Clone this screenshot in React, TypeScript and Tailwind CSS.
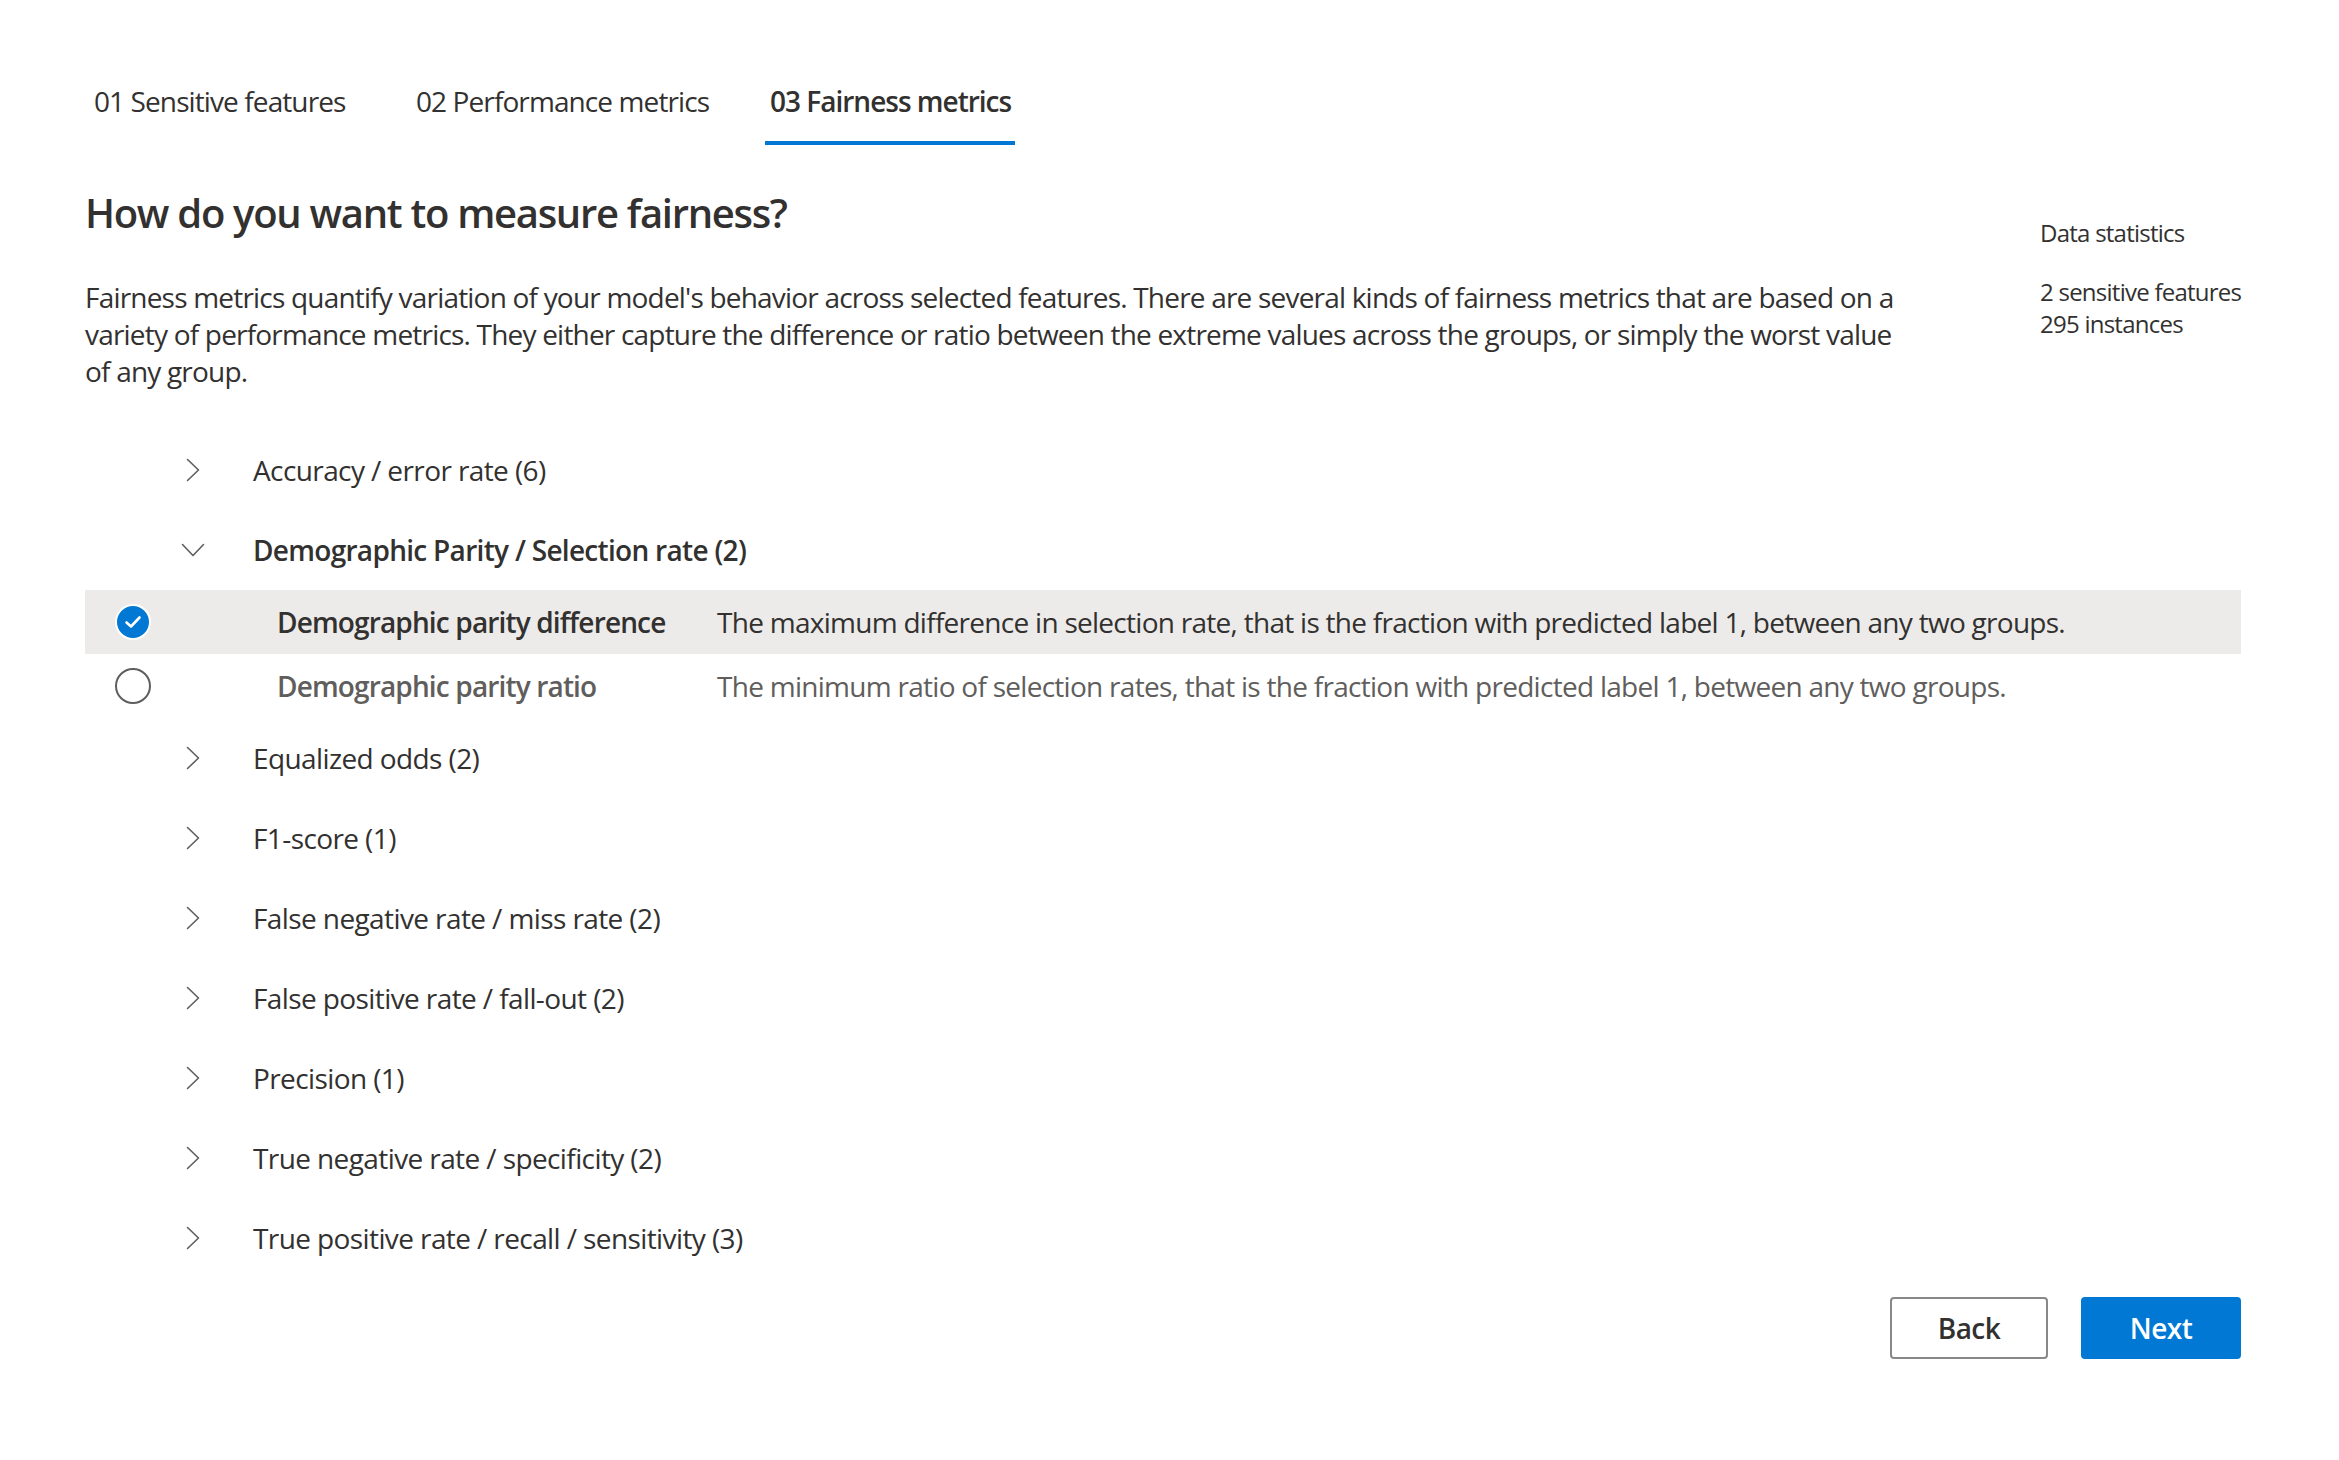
import React from "react";

const FONT = "font-['Open_Sans',sans-serif]";

function ChevronRight() {
  return (
    <svg width="14" height="24" viewBox="0 0 14 24" fill="none">
      <path d="M1.5 1.5 L12.5 12 L1.5 22.5" stroke="#605e5c" strokeWidth="1.6" strokeLinecap="round" strokeLinejoin="round" />
    </svg>
  );
}

function ChevronDown() {
  return (
    <svg width="24" height="14" viewBox="0 0 24 14" fill="none">
      <path d="M1.5 1.5 L12 12.5 L22.5 1.5" stroke="#605e5c" strokeWidth="1.6" strokeLinecap="round" strokeLinejoin="round" />
    </svg>
  );
}

function AccordionHeader({ label, expanded = false }: { label: string; expanded?: boolean }) {
  return (
    <div className="flex h-[80px] items-center">
      <div className="ml-[96px] flex h-[24px] w-[24px] items-center justify-center">
        {expanded ? <ChevronDown /> : <ChevronRight />}
      </div>
      <div
        className={
          expanded
            ? "ml-[48px] text-[28px] leading-[40px] tracking-[-0.7px] font-semibold text-[#323130]"
            : "ml-[48px] text-[28px] leading-[40px] tracking-[-0.6px] text-[#323130]"
        }
      >
        {label}
      </div>
    </div>
  );
}

function MetricRow({
  name,
  desc,
  selected,
}: {
  name: string;
  desc: string;
  selected: boolean;
}) {
  return (
    <div className={selected ? "flex h-[64px] items-center bg-[#edebe9]" : "flex h-[64px] items-center"}>
      <div className="flex w-[192px] items-center pl-[30px]">
        {selected ? (
          <div className="flex h-[36px] w-[36px] items-center justify-center rounded-full border-2 border-white bg-[#0078d4]">
            <svg width="18" height="14" viewBox="0 0 18 14" fill="none">
              <path d="M2.5 7.5 L7 11.5 L15.5 2.5" stroke="#ffffff" strokeWidth="2.6" strokeLinecap="round" strokeLinejoin="round" />
            </svg>
          </div>
        ) : (
          <div className="h-[36px] w-[36px] rounded-full border-2 border-[#605e5c]" />
        )}
      </div>
      <div
        className={
          selected
            ? "w-[440px] whitespace-nowrap text-[28px] leading-[40px] tracking-[-0.85px] font-semibold text-[#323130]"
            : "w-[440px] whitespace-nowrap text-[28px] leading-[40px] tracking-[-0.85px] font-semibold text-[#605e5c]"
        }
      >
        {name}
      </div>
      <div
        className={
          selected
            ? "flex-1 whitespace-nowrap text-[28px] leading-[40px] tracking-[-0.72px] text-[#323130]"
            : "flex-1 whitespace-nowrap text-[28px] leading-[40px] tracking-[-0.72px] text-[#605e5c]"
        }
      >
        {desc}
      </div>
    </div>
  );
}

export default function App() {
  const tabs = [
    { label: "01 Sensitive features", active: false, w: "w-[322px]" },
    { label: "02 Performance metrics", active: false, w: "w-[354px]" },
    { label: "03 Fairness metrics", active: true, w: "w-[250px]" },
  ];

  const after = [
    "Equalized odds (2)",
    "F1-score (1)",
    "False negative rate / miss rate (2)",
    "False positive rate / fall-out (2)",
    "Precision (1)",
    "True negative rate / specificity (2)",
    "True positive rate / recall / sensitivity (3)",
  ];

  return (
    <div className={`${FONT} min-h-[1460px] w-full bg-white pl-[85px] pr-[98px] pt-[81px] text-[#323130]`}>
      {/* Tabs */}
      <div className="flex pl-[4px]">
        {tabs.map((t) => (
          <div key={t.label} className={`flex flex-col ${t.w}`}>
            <div
              className={
                t.active
                  ? "whitespace-nowrap pl-[5px] text-[28px] leading-[40px] tracking-[-1px] font-semibold text-[#323130]"
                  : "whitespace-nowrap pl-[5px] text-[28px] leading-[40px] tracking-[-0.9px] text-[#323130]"
              }
            >
              {t.label}
            </div>
            <div className={t.active ? "mt-[20px] h-[4px] bg-[#0078d4]" : "mt-[20px] h-[4px] bg-transparent"} />
          </div>
        ))}
      </div>

      {/* Header + stats */}
      <div className="mt-[42px] flex">
        <div className="flex-1">
          <h1 className="text-[40px] leading-[52px] tracking-[-1.3px] font-semibold text-[#323130]">
            How do you want to measure fairness?
          </h1>
          <p className="mt-[40px] whitespace-nowrap text-[28px] leading-[37px] tracking-[-0.8px] text-[#323130]">
            Fairness metrics quantify variation of your model's behavior across selected features. There are several kinds of fairness metrics that are based on a
            <br />
            variety of performance metrics. They either capture the difference or ratio between the extreme values across the groups, or simply the worst value
            <br />
            of any group.
          </p>
        </div>
        <div className="w-[201px] pt-[30px] text-[24px] leading-[32px] tracking-[-0.75px] text-[#323130]">
          <div className="whitespace-nowrap">Data statistics</div>
          <div className="mt-[27px] whitespace-nowrap">2 sensitive features</div>
          <div className="whitespace-nowrap">295 instances</div>
        </div>
      </div>

      {/* Accordion */}
      <div className="mt-[40px] flex flex-col">
        <AccordionHeader label="Accuracy / error rate (6)" />
        <AccordionHeader label="Demographic Parity / Selection rate (2)" expanded />
        <MetricRow
          selected
          name="Demographic parity difference"
          desc="The maximum difference in selection rate, that is the fraction with predicted label 1, between any two groups."
        />
        <MetricRow
          selected={false}
          name="Demographic parity ratio"
          desc="The minimum ratio of selection rates, that is the fraction with predicted label 1, between any two groups."
        />
        {after.map((l) => (
          <AccordionHeader key={l} label={l} />
        ))}
      </div>

      {/* Buttons */}
      <div className="mt-[19px] flex justify-end gap-[33px]">
        <button className="h-[62px] w-[158px] rounded-[4px] border-2 border-[#8a8886] bg-white text-[28px] font-semibold tracking-[-0.5px] text-[#323130]">
          Back
        </button>
        <button className="h-[62px] w-[160px] rounded-[4px] bg-[#0078d4] text-[28px] font-semibold tracking-[-0.5px] text-white">
          Next
        </button>
      </div>
    </div>
  );
}
